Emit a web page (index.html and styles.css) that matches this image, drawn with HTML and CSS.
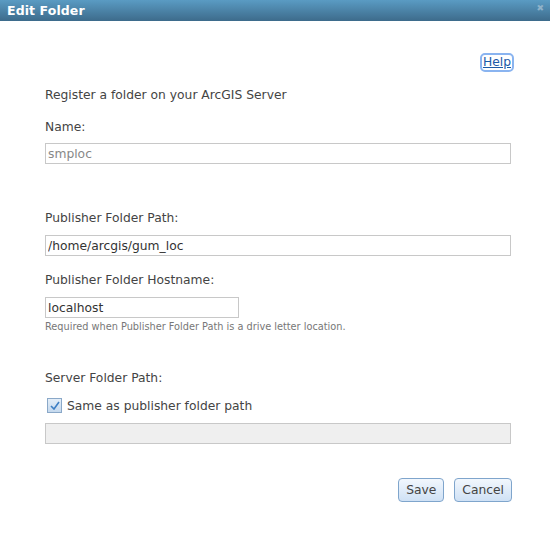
FILE: index.html
```html
<!DOCTYPE html>
<html lang="en">
<head>
    <meta charset="UTF-8">
    <title>Edit Folder</title>
    <link rel="stylesheet" href="styles.css">
</head>
<body>
    <div class="dialog">
        <div class="title-bar">
            <span class="title-text">Edit Folder</span>
            <span class="close-btn">&#x2716;</span>
        </div>
        <div class="dialog-body">
            <div class="help-row">
                <a href="#" class="help-link">Help</a>
            </div>
            <div class="intro">Register a folder on your ArcGIS Server</div>

            <div class="field">
                <label class="field-label name-label">Name:</label>
                <input type="text" class="text-input readonly" value="smploc" readonly>
            </div>

            <div class="field spaced">
                <label class="field-label">Publisher Folder Path:</label>
                <input type="text" class="text-input" value="/home/arcgis/gum_loc">
            </div>

            <div class="field">
                <label class="field-label">Publisher Folder Hostname:</label>
                <input type="text" class="text-input short" value="localhost">
                <div class="hint">Required when Publisher Folder Path is a drive letter location.</div>
            </div>

            <div class="field spaced-small">
                <label class="field-label">Server Folder Path:</label>
                <div class="check-row">
                    <span class="checkbox">
                        <svg width="10" height="9" viewBox="0 0 10 9"><path d="M1 5 L4 8 L9 1" fill="none" stroke="#3d7fc4" stroke-width="1.6"/></svg>
                    </span>
                    <span class="check-label">Same as publisher folder path</span>
                </div>
                <input type="text" class="text-input disabled" disabled>
            </div>

            <div class="button-row">
                <button type="button" class="btn">Save</button>
                <button type="button" class="btn">Cancel</button>
            </div>
        </div>
    </div>
</body>
</html>
```

FILE: styles.css
```css
body {
    margin: 0;
    background: #fff;
    font-family: Tahoma, "DejaVu Sans", Verdana, sans-serif;
    color: #444;
}
.dialog {
    width: 550px;
}
.title-bar {
    height: 21px;
    background: linear-gradient(#5a9bc3, #3d6b8b);
    display: flex;
    align-items: center;
    justify-content: space-between;
    padding: 0 6px 0 7px;
    box-sizing: border-box;
}
.title-text {
    color: #fff;
    font-size: 12.5px;
    font-weight: bold;
    letter-spacing: 0.1px;
}
.close-btn {
    color: #8fb2c9;
    font-size: 9px;
    margin-top: -6px;
}
.dialog-body {
    padding: 34px 38px 0 45px;
    font-size: 12.3px;
}
.help-row {
    display: flex;
    justify-content: flex-end;
}
.help-link {
    color: #1c5aa7;
    text-decoration: underline;
    outline: 2px solid #8ab4f0;
    border-radius: 3px;
    padding: 0 1px;
    line-height: 15px;
}
.intro {
    margin-top: 17px;
    line-height: 16px;
}
.field {
    margin-top: 16px;
}
.field-label {
    display: block;
    line-height: 16px;
    margin-bottom: 9px;
}
.name-label {
    margin-bottom: 8px;
}
.spaced {
    margin-top: 46px;
}
.spaced-small {
    margin-top: 38px;
}
.text-input {
    display: block;
    width: 466px;
    height: 21px;
    box-sizing: border-box;
    border: 1px solid #c8c8c8;
    padding: 0 2px;
    font-family: inherit;
    font-size: 12.3px;
    color: #333;
    margin: 0;
}
.text-input.readonly {
    color: #888;
}
.text-input.short {
    width: 194px;
}
.text-input.disabled {
    background: #efefef;
}
.hint {
    font-size: 9.75px;
    color: #777;
    margin-top: 3px;
}
.check-row {
    display: flex;
    align-items: center;
    margin-left: 2px;
    margin-top: 12px;
    margin-bottom: 10px;
}
.checkbox {
    width: 15px;
    height: 15px;
    box-sizing: border-box;
    border: 1px solid #8aa8c8;
    background: linear-gradient(#e4eef8, #c5d9ee);
    display: flex;
    align-items: center;
    justify-content: center;
    margin-right: 5px;
}
.button-row {
    display: flex;
    justify-content: flex-end;
    gap: 10px;
    margin-top: 34px;
}
.btn {
    height: 24px;
    padding: 0 7px;
    font-family: inherit;
    font-size: 12.3px;
    color: #444;
    background: linear-gradient(#f2f7fd, #cfe1f5);
    border: 1px solid #7fa5cc;
    border-radius: 4px;
    cursor: pointer;
}
```
